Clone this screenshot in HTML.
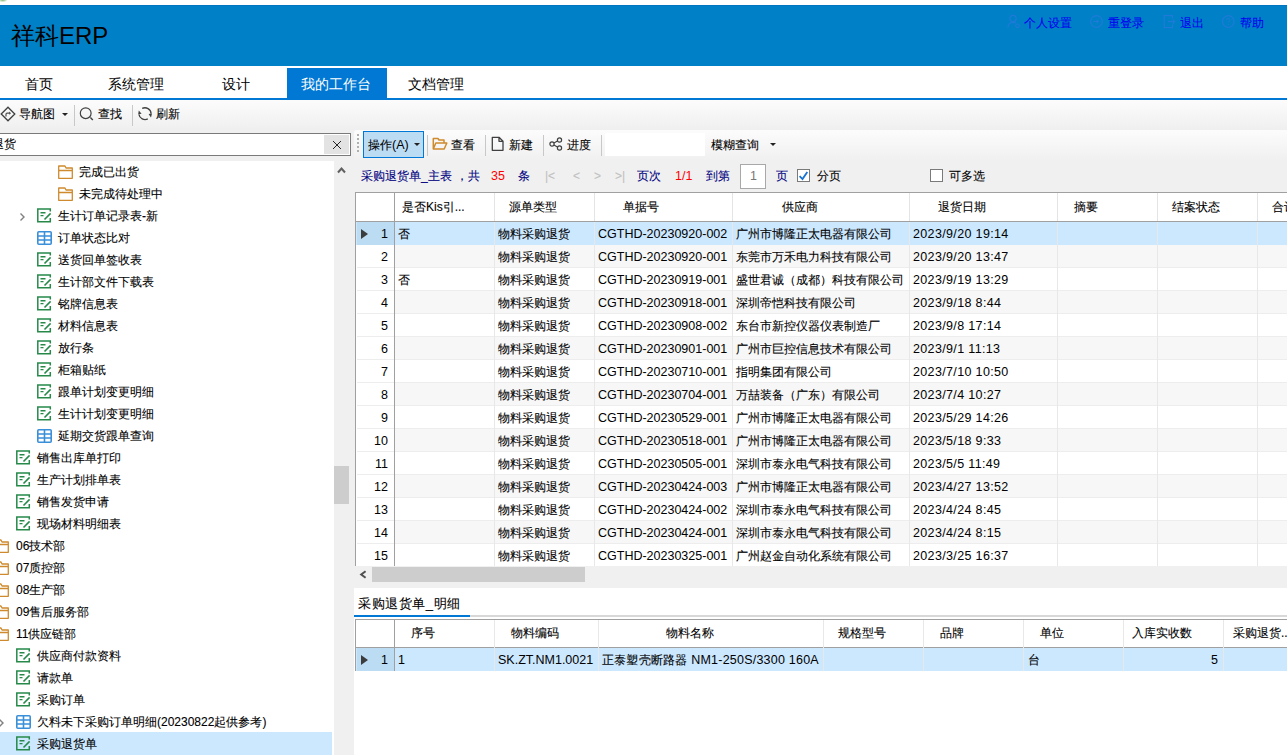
<!DOCTYPE html><html><head><meta charset="utf-8"><style>
*{box-sizing:border-box;margin:0;padding:0}
html,body{width:1287px;height:755px;overflow:hidden;background:#fff}
body{position:relative;font-family:"Liberation Sans",sans-serif;font-size:12px;color:#000;-webkit-text-stroke:0.1px}
.a{position:absolute;white-space:nowrap}
.t{position:absolute;white-space:nowrap;line-height:14px;height:14px}
.l{font-size:12.5px;-webkit-text-stroke:0}
#hdr{left:0;top:5px;width:1287px;height:61px;background:#0080c6;border-top:1px solid #0074bf}
#title{left:11px;top:21px;font-size:24px;line-height:30px;color:#000;-webkit-text-stroke:0}
.toplink{color:#0000f0;font-size:12px}
.nav{font-size:14px;line-height:16px;top:76px;-webkit-text-stroke:0}
#navline{left:0;top:98px;width:1287px;height:2px;background:#0078d4}
#acttab{left:287px;top:68px;width:100px;height:31px;background:#0078d4}
#tb1{left:0;top:100px;width:1287px;height:30px;background:linear-gradient(#fcfcfc,#efefef)}
.sep{position:absolute;width:1px;background:#c8c8c8}
#leftbg{left:0;top:130px;width:355px;height:625px;background:#f0f0f0}
#search{left:-1px;top:133px;width:352px;height:23px;border:1px solid #7a7a7a;background:#fff}
#xbtn{left:324px;top:135px;width:25px;height:19px;background:#e3e3e3}
#tree{left:0;top:161px;width:334px;height:594px;background:#fff}
#vtrack{left:334px;top:161px;width:21px;height:594px;background:#f0f0f0}
#vthumb{left:334px;top:466px;width:15px;height:38px;background:#cdcdcd}
#rightbg{left:355px;top:130px;width:932px;height:625px;background:#f0f0f0}
#tb2{left:354px;top:130px;width:933px;height:31px;background:linear-gradient(#fcfcfc,#f0f0f0);border-radius:3px 0 0 0}
#opbtn{left:363px;top:131px;width:61px;height:27px;background:#bcdcf4;border:1px solid #0078d7}
#grid{left:355px;top:192px;width:932px;height:375px;background:#fff;border-left:1px solid #a0a0a0;border-top:1px solid #a0a0a0}
.vl{position:absolute;width:1px;background:#e8e8e8}
.hl{position:absolute;height:1px;background:#ededed}
.tree .t{color:#000}
.sel{background:#cce8ff}
.gray{color:#c0c0c0}
.nv{color:#000080}
.red{color:#ff0000}
</style></head><body>
<div class="a" style="left:0;top:0;width:7px;height:2px;background:radial-gradient(ellipse at 40% 0,#7fb36a,rgba(255,255,255,0) 80%)"></div>
<div class="a" id="hdr"></div>
<div class="a" id="title">祥科<span style="font-size:24px">ERP</span></div>
<div class="t toplink" style="left:1024px;top:16px">个人设置</div>
<div class="t toplink" style="left:1108px;top:16px">重登录</div>
<div class="t toplink" style="left:1180px;top:16px">退出</div>
<div class="t toplink" style="left:1240px;top:16px">帮助</div>
<svg class="a" style="left:1007px;top:14px" width="14" height="15" viewBox="0 0 14 15"><circle cx="6" cy="4.5" r="3.2" fill="none" stroke="#1f7ad9" stroke-width="1.2"/><path d="M0.8 13.5 Q1.5 8.5 6 8.3 Q8 8.3 9 9" fill="none" stroke="#1f7ad9" stroke-width="1.2"/><circle cx="10.5" cy="11.8" r="1.8" fill="none" stroke="#1f7ad9" stroke-width="1.1"/></svg>
<svg class="a" style="left:1090px;top:14px" width="14" height="15" viewBox="0 0 14 15"><circle cx="6.5" cy="7.5" r="5.8" fill="none" stroke="#1f7ad9" stroke-width="1.2"/><path d="M3.5 7.5 H8.5 M6.8 5.8 L8.5 7.5 L6.8 9.2" fill="none" stroke="#1f7ad9" stroke-width="1.1"/></svg>
<svg class="a" style="left:1163px;top:14px" width="14" height="15" viewBox="0 0 14 15"><path d="M9.5 4.5 V1.6 H1.2 V13.6 H9.5 V10.5" fill="none" stroke="#1f7ad9" stroke-width="1.2"/><path d="M5 7.6 H11.8 M9.8 5.6 L11.8 7.6 L9.8 9.6" fill="none" stroke="#1f7ad9" stroke-width="1.1"/></svg>
<svg class="a" style="left:1222px;top:14px" width="14" height="15" viewBox="0 0 14 15"><circle cx="6.3" cy="7.5" r="5.8" fill="none" stroke="#1f7ad9" stroke-width="1.2"/><path d="M4.8 6 Q4.8 4.3 6.4 4.3 Q8 4.3 8 5.8 Q8 6.8 6.4 7.4 V8.6" fill="none" stroke="#1f7ad9" stroke-width="1"/><circle cx="6.4" cy="10.4" r="0.6" fill="#1f7ad9"/></svg>
<div class="a" id="acttab"></div>
<div class="a" id="navline"></div>
<div class="a nav" style="left:25px;color:#000">首页</div>
<div class="a nav" style="left:108px;color:#000">系统管理</div>
<div class="a nav" style="left:222px;color:#000">设计</div>
<div class="a nav" style="left:301px;color:#fff">我的工作台</div>
<div class="a nav" style="left:408px;color:#000">文档管理</div>
<div class="a" id="tb1"></div>
<div class="a" id="leftbg"></div>
<div class="a" id="rightbg"></div>
<svg class="a" style="left:0px;top:106px" width="16" height="16" viewBox="0 0 16 16"><path d="M8 1.2 L14.8 8 L8 14.8 L1.2 8 Z" fill="none" stroke="#404040" stroke-width="1.3"/><path d="M6 10.5 V8.3 Q6 7.2 7.2 7.2 H10" fill="none" stroke="#505050" stroke-width="1.2"/><path d="M9.2 5.6 L11 7.2 L9.2 8.8 Z" fill="#505050"/></svg>
<div class="t" style="left:19px;top:107px">导航图</div>
<div class="a" style="left:61.5px;top:113px;width:0;height:0;border-left:3px solid transparent;border-right:3px solid transparent;border-top:3px solid #222"></div>
<div class="sep" style="left:74px;top:105px;height:21px"></div>
<svg class="a" style="left:79px;top:106px" width="16" height="16" viewBox="0 0 16 16"><circle cx="6.7" cy="7.2" r="5.4" fill="none" stroke="#404040" stroke-width="1.2"/><path d="M11.4 11.6 L13.8 14" stroke="#404040" stroke-width="1.4"/></svg>
<div class="t" style="left:98px;top:107px">查找</div>
<div class="sep" style="left:132px;top:105px;height:21px"></div>
<svg class="a" style="left:137px;top:106px" width="16" height="16" viewBox="0 0 16 16"><path d="M5.2 2.4 A6.2 6.2 0 0 1 14.1 7.6" fill="none" stroke="#404040" stroke-width="1.3"/><path d="M10.8 12.9 A6.2 6.2 0 0 1 1.9 8.4" fill="none" stroke="#404040" stroke-width="1.3"/><path d="M11.6 8 L15 7.6 L14 11.4 Z" fill="#404040"/><path d="M1.8 4.4 L4.6 7.8 L1.2 8.2 Z" fill="#404040"/></svg>
<div class="t" style="left:156px;top:107px">刷新</div>
<div class="a" id="search"></div>
<div class="t" style="left:-8px;top:137px">退货</div>
<div class="a" id="xbtn"></div>
<svg class="a" style="left:332px;top:140px" width="10" height="10" viewBox="0 0 10 10"><path d="M1 1 L9 9 M9 1 L1 9" stroke="#111" stroke-width="0.9"/></svg>
<div class="a" id="tree"></div>
<div class="a" id="vtrack"></div>
<div class="a" id="vthumb"></div>
<svg class="a" style="left:337px;top:166px" width="9" height="8" viewBox="0 0 9 8"><path d="M1 6.5 L4.5 2.5 L8 6.5" fill="none" stroke="#606060" stroke-width="2"/></svg>
<svg class="a" style="left:58px;top:165px" width="16" height="16" viewBox="0 0 16 16"><path d="M0.7 1 H7 L8 3 H14.3 V13.3 H0.7 Z M0.7 5.5 H14.3" fill="none" stroke="#cf8a2d" stroke-width="1.3" stroke-linejoin="round"/></svg>
<div class="t" style="left:79px;top:165px">完成已出货</div>
<svg class="a" style="left:58px;top:187px" width="16" height="16" viewBox="0 0 16 16"><path d="M0.7 1 H7 L8 3 H14.3 V13.3 H0.7 Z M0.7 5.5 H14.3" fill="none" stroke="#cf8a2d" stroke-width="1.3" stroke-linejoin="round"/></svg>
<div class="t" style="left:79px;top:187px">未完成待处理中</div>
<svg class="a" style="left:19px;top:212px" width="7" height="10" viewBox="0 0 7 10"><path d="M1.5 1.5 L5 5 L1.5 8.5" fill="none" stroke="#808080" stroke-width="1.4"/></svg>
<svg class="a" style="left:37px;top:208px" width="16" height="16" viewBox="0 0 16 16"><path d="M13.3 3.5 V1 H0.8 V13.8 H13.3 V10" fill="none" stroke="#26894a" stroke-width="1.5"/><path d="M3.5 4.8 H8.5 M3.5 7.6 H6.5" stroke="#26894a" stroke-width="1.4"/><path d="M7.5 11.5 L13.6 5.4" stroke="#26894a" stroke-width="1.6"/></svg>
<div class="t" style="left:58px;top:209px">生计订单记录表<span class="">-</span>新</div>
<svg class="a" style="left:37px;top:231px" width="16" height="16" viewBox="0 0 16 16"><rect x="0.8" y="0.8" width="13.4" height="12.4" rx="1" fill="none" stroke="#3a8fd9" stroke-width="1.6"/><path d="M0.8 5 H14.2 M0.8 9 H14.2 M7.5 0.8 V13.2" stroke="#3a8fd9" stroke-width="1.6"/></svg>
<div class="t" style="left:58px;top:231px">订单状态比对</div>
<svg class="a" style="left:37px;top:252px" width="16" height="16" viewBox="0 0 16 16"><path d="M13.3 3.5 V1 H0.8 V13.8 H13.3 V10" fill="none" stroke="#26894a" stroke-width="1.5"/><path d="M3.5 4.8 H8.5 M3.5 7.6 H6.5" stroke="#26894a" stroke-width="1.4"/><path d="M7.5 11.5 L13.6 5.4" stroke="#26894a" stroke-width="1.6"/></svg>
<div class="t" style="left:58px;top:253px">送货回单签收表</div>
<svg class="a" style="left:37px;top:274px" width="16" height="16" viewBox="0 0 16 16"><path d="M13.3 3.5 V1 H0.8 V13.8 H13.3 V10" fill="none" stroke="#26894a" stroke-width="1.5"/><path d="M3.5 4.8 H8.5 M3.5 7.6 H6.5" stroke="#26894a" stroke-width="1.4"/><path d="M7.5 11.5 L13.6 5.4" stroke="#26894a" stroke-width="1.6"/></svg>
<div class="t" style="left:58px;top:275px">生计部文件下载表</div>
<svg class="a" style="left:37px;top:296px" width="16" height="16" viewBox="0 0 16 16"><path d="M13.3 3.5 V1 H0.8 V13.8 H13.3 V10" fill="none" stroke="#26894a" stroke-width="1.5"/><path d="M3.5 4.8 H8.5 M3.5 7.6 H6.5" stroke="#26894a" stroke-width="1.4"/><path d="M7.5 11.5 L13.6 5.4" stroke="#26894a" stroke-width="1.6"/></svg>
<div class="t" style="left:58px;top:297px">铭牌信息表</div>
<svg class="a" style="left:37px;top:318px" width="16" height="16" viewBox="0 0 16 16"><path d="M13.3 3.5 V1 H0.8 V13.8 H13.3 V10" fill="none" stroke="#26894a" stroke-width="1.5"/><path d="M3.5 4.8 H8.5 M3.5 7.6 H6.5" stroke="#26894a" stroke-width="1.4"/><path d="M7.5 11.5 L13.6 5.4" stroke="#26894a" stroke-width="1.6"/></svg>
<div class="t" style="left:58px;top:319px">材料信息表</div>
<svg class="a" style="left:37px;top:340px" width="16" height="16" viewBox="0 0 16 16"><path d="M13.3 3.5 V1 H0.8 V13.8 H13.3 V10" fill="none" stroke="#26894a" stroke-width="1.5"/><path d="M3.5 4.8 H8.5 M3.5 7.6 H6.5" stroke="#26894a" stroke-width="1.4"/><path d="M7.5 11.5 L13.6 5.4" stroke="#26894a" stroke-width="1.6"/></svg>
<div class="t" style="left:58px;top:341px">放行条</div>
<svg class="a" style="left:37px;top:362px" width="16" height="16" viewBox="0 0 16 16"><path d="M13.3 3.5 V1 H0.8 V13.8 H13.3 V10" fill="none" stroke="#26894a" stroke-width="1.5"/><path d="M3.5 4.8 H8.5 M3.5 7.6 H6.5" stroke="#26894a" stroke-width="1.4"/><path d="M7.5 11.5 L13.6 5.4" stroke="#26894a" stroke-width="1.6"/></svg>
<div class="t" style="left:58px;top:363px">柜箱贴纸</div>
<svg class="a" style="left:37px;top:384px" width="16" height="16" viewBox="0 0 16 16"><path d="M13.3 3.5 V1 H0.8 V13.8 H13.3 V10" fill="none" stroke="#26894a" stroke-width="1.5"/><path d="M3.5 4.8 H8.5 M3.5 7.6 H6.5" stroke="#26894a" stroke-width="1.4"/><path d="M7.5 11.5 L13.6 5.4" stroke="#26894a" stroke-width="1.6"/></svg>
<div class="t" style="left:58px;top:385px">跟单计划变更明细</div>
<svg class="a" style="left:37px;top:406px" width="16" height="16" viewBox="0 0 16 16"><path d="M13.3 3.5 V1 H0.8 V13.8 H13.3 V10" fill="none" stroke="#26894a" stroke-width="1.5"/><path d="M3.5 4.8 H8.5 M3.5 7.6 H6.5" stroke="#26894a" stroke-width="1.4"/><path d="M7.5 11.5 L13.6 5.4" stroke="#26894a" stroke-width="1.6"/></svg>
<div class="t" style="left:58px;top:407px">生计计划变更明细</div>
<svg class="a" style="left:37px;top:429px" width="16" height="16" viewBox="0 0 16 16"><rect x="0.8" y="0.8" width="13.4" height="12.4" rx="1" fill="none" stroke="#3a8fd9" stroke-width="1.6"/><path d="M0.8 5 H14.2 M0.8 9 H14.2 M7.5 0.8 V13.2" stroke="#3a8fd9" stroke-width="1.6"/></svg>
<div class="t" style="left:58px;top:429px">延期交货跟单查询</div>
<svg class="a" style="left:16px;top:450px" width="16" height="16" viewBox="0 0 16 16"><path d="M13.3 3.5 V1 H0.8 V13.8 H13.3 V10" fill="none" stroke="#26894a" stroke-width="1.5"/><path d="M3.5 4.8 H8.5 M3.5 7.6 H6.5" stroke="#26894a" stroke-width="1.4"/><path d="M7.5 11.5 L13.6 5.4" stroke="#26894a" stroke-width="1.6"/></svg>
<div class="t" style="left:37px;top:451px">销售出库单打印</div>
<svg class="a" style="left:16px;top:472px" width="16" height="16" viewBox="0 0 16 16"><path d="M13.3 3.5 V1 H0.8 V13.8 H13.3 V10" fill="none" stroke="#26894a" stroke-width="1.5"/><path d="M3.5 4.8 H8.5 M3.5 7.6 H6.5" stroke="#26894a" stroke-width="1.4"/><path d="M7.5 11.5 L13.6 5.4" stroke="#26894a" stroke-width="1.6"/></svg>
<div class="t" style="left:37px;top:473px">生产计划排单表</div>
<svg class="a" style="left:16px;top:494px" width="16" height="16" viewBox="0 0 16 16"><path d="M13.3 3.5 V1 H0.8 V13.8 H13.3 V10" fill="none" stroke="#26894a" stroke-width="1.5"/><path d="M3.5 4.8 H8.5 M3.5 7.6 H6.5" stroke="#26894a" stroke-width="1.4"/><path d="M7.5 11.5 L13.6 5.4" stroke="#26894a" stroke-width="1.6"/></svg>
<div class="t" style="left:37px;top:495px">销售发货申请</div>
<svg class="a" style="left:16px;top:516px" width="16" height="16" viewBox="0 0 16 16"><path d="M13.3 3.5 V1 H0.8 V13.8 H13.3 V10" fill="none" stroke="#26894a" stroke-width="1.5"/><path d="M3.5 4.8 H8.5 M3.5 7.6 H6.5" stroke="#26894a" stroke-width="1.4"/><path d="M7.5 11.5 L13.6 5.4" stroke="#26894a" stroke-width="1.6"/></svg>
<div class="t" style="left:37px;top:517px">现场材料明细表</div>
<svg class="a" style="left:-6px;top:539px" width="16" height="16" viewBox="0 0 16 16"><path d="M0.7 1 H7 L8 3 H14.3 V13.3 H0.7 Z M0.7 5.5 H14.3" fill="none" stroke="#cf8a2d" stroke-width="1.3" stroke-linejoin="round"/></svg>
<div class="t" style="left:16px;top:539px"><span class="">06</span>技术部</div>
<svg class="a" style="left:-6px;top:561px" width="16" height="16" viewBox="0 0 16 16"><path d="M0.7 1 H7 L8 3 H14.3 V13.3 H0.7 Z M0.7 5.5 H14.3" fill="none" stroke="#cf8a2d" stroke-width="1.3" stroke-linejoin="round"/></svg>
<div class="t" style="left:16px;top:561px"><span class="">07</span>质控部</div>
<svg class="a" style="left:-6px;top:583px" width="16" height="16" viewBox="0 0 16 16"><path d="M0.7 1 H7 L8 3 H14.3 V13.3 H0.7 Z M0.7 5.5 H14.3" fill="none" stroke="#cf8a2d" stroke-width="1.3" stroke-linejoin="round"/></svg>
<div class="t" style="left:16px;top:583px"><span class="">08</span>生产部</div>
<svg class="a" style="left:-6px;top:605px" width="16" height="16" viewBox="0 0 16 16"><path d="M0.7 1 H7 L8 3 H14.3 V13.3 H0.7 Z M0.7 5.5 H14.3" fill="none" stroke="#cf8a2d" stroke-width="1.3" stroke-linejoin="round"/></svg>
<div class="t" style="left:16px;top:605px"><span class="">09</span>售后服务部</div>
<svg class="a" style="left:-6px;top:627px" width="16" height="16" viewBox="0 0 16 16"><path d="M0.7 1 H7 L8 3 H14.3 V13.3 H0.7 Z M0.7 5.5 H14.3" fill="none" stroke="#cf8a2d" stroke-width="1.3" stroke-linejoin="round"/></svg>
<div class="t" style="left:16px;top:627px"><span class="">11</span>供应链部</div>
<svg class="a" style="left:16px;top:648px" width="16" height="16" viewBox="0 0 16 16"><path d="M13.3 3.5 V1 H0.8 V13.8 H13.3 V10" fill="none" stroke="#26894a" stroke-width="1.5"/><path d="M3.5 4.8 H8.5 M3.5 7.6 H6.5" stroke="#26894a" stroke-width="1.4"/><path d="M7.5 11.5 L13.6 5.4" stroke="#26894a" stroke-width="1.6"/></svg>
<div class="t" style="left:37px;top:649px">供应商付款资料</div>
<svg class="a" style="left:16px;top:670px" width="16" height="16" viewBox="0 0 16 16"><path d="M13.3 3.5 V1 H0.8 V13.8 H13.3 V10" fill="none" stroke="#26894a" stroke-width="1.5"/><path d="M3.5 4.8 H8.5 M3.5 7.6 H6.5" stroke="#26894a" stroke-width="1.4"/><path d="M7.5 11.5 L13.6 5.4" stroke="#26894a" stroke-width="1.6"/></svg>
<div class="t" style="left:37px;top:671px">请款单</div>
<svg class="a" style="left:16px;top:692px" width="16" height="16" viewBox="0 0 16 16"><path d="M13.3 3.5 V1 H0.8 V13.8 H13.3 V10" fill="none" stroke="#26894a" stroke-width="1.5"/><path d="M3.5 4.8 H8.5 M3.5 7.6 H6.5" stroke="#26894a" stroke-width="1.4"/><path d="M7.5 11.5 L13.6 5.4" stroke="#26894a" stroke-width="1.6"/></svg>
<div class="t" style="left:37px;top:693px">采购订单</div>
<svg class="a" style="left:-2px;top:718px" width="7" height="10" viewBox="0 0 7 10"><path d="M1.5 1.5 L5 5 L1.5 8.5" fill="none" stroke="#808080" stroke-width="1.4"/></svg>
<svg class="a" style="left:16px;top:715px" width="16" height="16" viewBox="0 0 16 16"><rect x="0.8" y="0.8" width="13.4" height="12.4" rx="1" fill="none" stroke="#3a8fd9" stroke-width="1.6"/><path d="M0.8 5 H14.2 M0.8 9 H14.2 M7.5 0.8 V13.2" stroke="#3a8fd9" stroke-width="1.6"/></svg>
<div class="t" style="left:37px;top:715px">欠料未下采购订单明细<span class="">(20230822</span>起供参考<span class="">)</span></div>
<div class="a sel" style="left:0;top:732px;width:332px;height:23px"></div>
<svg class="a" style="left:16px;top:736px" width="16" height="16" viewBox="0 0 16 16"><path d="M13.3 3.5 V1 H0.8 V13.8 H13.3 V10" fill="none" stroke="#26894a" stroke-width="1.5"/><path d="M3.5 4.8 H8.5 M3.5 7.6 H6.5" stroke="#26894a" stroke-width="1.4"/><path d="M7.5 11.5 L13.6 5.4" stroke="#26894a" stroke-width="1.6"/></svg>
<div class="t" style="left:37px;top:737px">采购退货单</div>
<div class="a" id="tb2"></div>
<div class="a" style="left:357px;top:134px;width:2px;height:2px;background:#b0b0b0"></div>
<div class="a" style="left:357px;top:138px;width:2px;height:2px;background:#b0b0b0"></div>
<div class="a" style="left:357px;top:142px;width:2px;height:2px;background:#b0b0b0"></div>
<div class="a" style="left:357px;top:146px;width:2px;height:2px;background:#b0b0b0"></div>
<div class="a" style="left:357px;top:150px;width:2px;height:2px;background:#b0b0b0"></div>
<div class="a" id="opbtn"></div>
<div class="t" style="left:368px;top:138px">操作<span class="l">(A)</span></div>
<div class="a" style="left:414px;top:143px;border-left:3px solid transparent;border-right:3px solid transparent;border-top:3px solid #222"></div>
<div class="sep" style="left:427px;top:135px;height:21px"></div>
<div class="sep" style="left:485px;top:135px;height:21px"></div>
<div class="sep" style="left:543px;top:135px;height:21px"></div>
<div class="sep" style="left:601px;top:135px;height:21px"></div>
<svg class="a" style="left:432px;top:137px" width="16" height="14" viewBox="0 0 16 14"><path d="M1.3 12 V1.5 H6 L7 3 H12 V5.5 M1.3 12 L3.8 6 H14.8 L12.2 12 Z" fill="none" stroke="#cf8a2d" stroke-width="1.5" stroke-linejoin="round"/></svg>
<div class="t" style="left:451px;top:138px">查看</div>
<svg class="a" style="left:491px;top:136px" width="14" height="16" viewBox="0 0 14 16"><path d="M1.3 1.3 H8 L12 5.3 V14.3 H1.3 Z M8 1.3 V5.3 H12" fill="none" stroke="#404040" stroke-width="1.3" stroke-linejoin="round"/></svg>
<div class="t" style="left:509px;top:138px">新建</div>
<svg class="a" style="left:549px;top:137px" width="14" height="14" viewBox="0 0 14 14"><circle cx="3" cy="7" r="2.1" fill="none" stroke="#404040" stroke-width="1.2"/><circle cx="10.5" cy="3" r="2.1" fill="none" stroke="#404040" stroke-width="1.2"/><circle cx="10.5" cy="11" r="2.1" fill="none" stroke="#404040" stroke-width="1.2"/><path d="M4.9 6 L8.5 4 M4.9 8 L8.5 10" stroke="#404040" stroke-width="1.2"/></svg>
<div class="t" style="left:567px;top:138px">进度</div>
<div class="a" style="left:605px;top:133px;width:100px;height:23px;background:#fff"></div>
<div class="t" style="left:711px;top:138px">模糊查询</div>
<div class="a" style="left:770px;top:143px;border-left:3px solid transparent;border-right:3px solid transparent;border-top:3px solid #222"></div>
<div class="t nv" style="left:361px;top:169px">采购退货单_主表</div>
<div class="t nv" style="left:456px;top:169px">，共</div>
<div class="t red" style="left:491px;top:169px"><span class="l">35</span></div>
<div class="t nv" style="left:518px;top:169px">条</div>
<div class="t gray" style="left:545px;top:169px">|&lt;</div>
<div class="t gray" style="left:573px;top:169px">&lt;</div>
<div class="t gray" style="left:594px;top:169px">&gt;</div>
<div class="t gray" style="left:615px;top:169px">&gt;|</div>
<div class="t nv" style="left:637px;top:169px">页次</div>
<div class="t red" style="left:675px;top:169px"><span class="l">1/1</span></div>
<div class="t nv" style="left:706px;top:169px">到第</div>
<div class="a" style="left:740px;top:164px;width:26px;height:25px;background:#fff;border:1px solid #a8a8a8"></div>
<div class="t" style="left:750px;top:169px;color:#777"><span class="l">1</span></div>
<div class="t nv" style="left:776px;top:169px">页</div>
<svg class="a" style="left:797px;top:169px" width="13" height="13" viewBox="0 0 13 13"><rect x="0.5" y="0.5" width="12" height="12" fill="#fff" stroke="#7a7a7a"/><path d="M2.6 7.2 L5.5 10.1 L10.3 2.9" fill="none" stroke="#1874d2" stroke-width="1.8"/></svg>
<div class="t" style="left:817px;top:169px">分页</div>
<svg class="a" style="left:930px;top:169px" width="13" height="13" viewBox="0 0 13 13"><rect x="0.5" y="0.5" width="12" height="12" fill="#fff" stroke="#7a7a7a"/></svg>
<div class="t" style="left:949px;top:169px">可多选</div>
<div class="a" style="left:355px;top:192px;width:932px;height:374px;background:#fff"></div>
<div class="a sel" style="left:356px;top:222px;width:931px;height:23px"></div>
<div class="a" style="left:357px;top:222px;width:37px;height:23px;background:#bcdcf4"></div>
<div class="t" style="left:360px;top:227px;width:28px;text-align:right"><span class="l">1</span></div>
<div class="t" style="left:398px;top:227px">否</div>
<div class="t" style="left:498px;top:227px">物料采购退货</div>
<div class="t" style="left:598px;top:227px"><span class="l">CGTHD-20230920-002</span></div>
<div class="t" style="left:736px;top:227px">广州市博隆正太电器有限公司</div>
<div class="t" style="left:913px;top:227px;letter-spacing:0.35px"><span class="l">2023/9/20 19:14</span></div>
<div class="a" style="left:395px;top:245px;width:892px;height:22px;background:#f7f7f7"></div>
<div class="hl" style="left:357px;top:267px;width:930px"></div>
<div class="t" style="left:360px;top:250px;width:28px;text-align:right"><span class="l">2</span></div>
<div class="t" style="left:498px;top:250px">物料采购退货</div>
<div class="t" style="left:598px;top:250px"><span class="l">CGTHD-20230920-001</span></div>
<div class="t" style="left:736px;top:250px">东莞市万禾电力科技有限公司</div>
<div class="t" style="left:913px;top:250px;letter-spacing:0.35px"><span class="l">2023/9/20 13:47</span></div>
<div class="hl" style="left:357px;top:290px;width:930px"></div>
<div class="t" style="left:360px;top:273px;width:28px;text-align:right"><span class="l">3</span></div>
<div class="t" style="left:398px;top:273px">否</div>
<div class="t" style="left:498px;top:273px">物料采购退货</div>
<div class="t" style="left:598px;top:273px"><span class="l">CGTHD-20230919-001</span></div>
<div class="t" style="left:736px;top:273px">盛世君诚（成都）科技有限公司</div>
<div class="t" style="left:913px;top:273px;letter-spacing:0.35px"><span class="l">2023/9/19 13:29</span></div>
<div class="a" style="left:395px;top:291px;width:892px;height:22px;background:#f7f7f7"></div>
<div class="hl" style="left:357px;top:313px;width:930px"></div>
<div class="t" style="left:360px;top:296px;width:28px;text-align:right"><span class="l">4</span></div>
<div class="t" style="left:498px;top:296px">物料采购退货</div>
<div class="t" style="left:598px;top:296px"><span class="l">CGTHD-20230918-001</span></div>
<div class="t" style="left:736px;top:296px">深圳帝恺科技有限公司</div>
<div class="t" style="left:913px;top:296px;letter-spacing:0.35px"><span class="l">2023/9/18 8:44</span></div>
<div class="hl" style="left:357px;top:336px;width:930px"></div>
<div class="t" style="left:360px;top:319px;width:28px;text-align:right"><span class="l">5</span></div>
<div class="t" style="left:498px;top:319px">物料采购退货</div>
<div class="t" style="left:598px;top:319px"><span class="l">CGTHD-20230908-002</span></div>
<div class="t" style="left:736px;top:319px">东台市新控仪器仪表制造厂</div>
<div class="t" style="left:913px;top:319px;letter-spacing:0.35px"><span class="l">2023/9/8 17:14</span></div>
<div class="a" style="left:395px;top:337px;width:892px;height:22px;background:#f7f7f7"></div>
<div class="hl" style="left:357px;top:359px;width:930px"></div>
<div class="t" style="left:360px;top:342px;width:28px;text-align:right"><span class="l">6</span></div>
<div class="t" style="left:498px;top:342px">物料采购退货</div>
<div class="t" style="left:598px;top:342px"><span class="l">CGTHD-20230901-001</span></div>
<div class="t" style="left:736px;top:342px">广州市巨控信息技术有限公司</div>
<div class="t" style="left:913px;top:342px;letter-spacing:0.35px"><span class="l">2023/9/1 11:13</span></div>
<div class="hl" style="left:357px;top:382px;width:930px"></div>
<div class="t" style="left:360px;top:365px;width:28px;text-align:right"><span class="l">7</span></div>
<div class="t" style="left:498px;top:365px">物料采购退货</div>
<div class="t" style="left:598px;top:365px"><span class="l">CGTHD-20230710-001</span></div>
<div class="t" style="left:736px;top:365px">指明集团有限公司</div>
<div class="t" style="left:913px;top:365px;letter-spacing:0.35px"><span class="l">2023/7/10 10:50</span></div>
<div class="a" style="left:395px;top:383px;width:892px;height:22px;background:#f7f7f7"></div>
<div class="hl" style="left:357px;top:405px;width:930px"></div>
<div class="t" style="left:360px;top:388px;width:28px;text-align:right"><span class="l">8</span></div>
<div class="t" style="left:498px;top:388px">物料采购退货</div>
<div class="t" style="left:598px;top:388px"><span class="l">CGTHD-20230704-001</span></div>
<div class="t" style="left:736px;top:388px">万喆装备（广东）有限公司</div>
<div class="t" style="left:913px;top:388px;letter-spacing:0.35px"><span class="l">2023/7/4 10:27</span></div>
<div class="hl" style="left:357px;top:428px;width:930px"></div>
<div class="t" style="left:360px;top:411px;width:28px;text-align:right"><span class="l">9</span></div>
<div class="t" style="left:498px;top:411px">物料采购退货</div>
<div class="t" style="left:598px;top:411px"><span class="l">CGTHD-20230529-001</span></div>
<div class="t" style="left:736px;top:411px">广州市博隆正太电器有限公司</div>
<div class="t" style="left:913px;top:411px;letter-spacing:0.35px"><span class="l">2023/5/29 14:26</span></div>
<div class="a" style="left:395px;top:429px;width:892px;height:22px;background:#f7f7f7"></div>
<div class="hl" style="left:357px;top:451px;width:930px"></div>
<div class="t" style="left:360px;top:434px;width:28px;text-align:right"><span class="l">10</span></div>
<div class="t" style="left:498px;top:434px">物料采购退货</div>
<div class="t" style="left:598px;top:434px"><span class="l">CGTHD-20230518-001</span></div>
<div class="t" style="left:736px;top:434px">广州市博隆正太电器有限公司</div>
<div class="t" style="left:913px;top:434px;letter-spacing:0.35px"><span class="l">2023/5/18 9:33</span></div>
<div class="hl" style="left:357px;top:474px;width:930px"></div>
<div class="t" style="left:360px;top:457px;width:28px;text-align:right"><span class="l">11</span></div>
<div class="t" style="left:498px;top:457px">物料采购退货</div>
<div class="t" style="left:598px;top:457px"><span class="l">CGTHD-20230505-001</span></div>
<div class="t" style="left:736px;top:457px">深圳市泰永电气科技有限公司</div>
<div class="t" style="left:913px;top:457px;letter-spacing:0.35px"><span class="l">2023/5/5 11:49</span></div>
<div class="a" style="left:395px;top:475px;width:892px;height:22px;background:#f7f7f7"></div>
<div class="hl" style="left:357px;top:497px;width:930px"></div>
<div class="t" style="left:360px;top:480px;width:28px;text-align:right"><span class="l">12</span></div>
<div class="t" style="left:498px;top:480px">物料采购退货</div>
<div class="t" style="left:598px;top:480px"><span class="l">CGTHD-20230424-003</span></div>
<div class="t" style="left:736px;top:480px">广州市博隆正太电器有限公司</div>
<div class="t" style="left:913px;top:480px;letter-spacing:0.35px"><span class="l">2023/4/27 13:52</span></div>
<div class="hl" style="left:357px;top:520px;width:930px"></div>
<div class="t" style="left:360px;top:503px;width:28px;text-align:right"><span class="l">13</span></div>
<div class="t" style="left:498px;top:503px">物料采购退货</div>
<div class="t" style="left:598px;top:503px"><span class="l">CGTHD-20230424-002</span></div>
<div class="t" style="left:736px;top:503px">深圳市泰永电气科技有限公司</div>
<div class="t" style="left:913px;top:503px;letter-spacing:0.35px"><span class="l">2023/4/24 8:45</span></div>
<div class="a" style="left:395px;top:521px;width:892px;height:22px;background:#f7f7f7"></div>
<div class="hl" style="left:357px;top:543px;width:930px"></div>
<div class="t" style="left:360px;top:526px;width:28px;text-align:right"><span class="l">14</span></div>
<div class="t" style="left:498px;top:526px">物料采购退货</div>
<div class="t" style="left:598px;top:526px"><span class="l">CGTHD-20230424-001</span></div>
<div class="t" style="left:736px;top:526px">深圳市泰永电气科技有限公司</div>
<div class="t" style="left:913px;top:526px;letter-spacing:0.35px"><span class="l">2023/4/24 8:15</span></div>
<div class="hl" style="left:357px;top:566px;width:930px"></div>
<div class="t" style="left:360px;top:549px;width:28px;text-align:right"><span class="l">15</span></div>
<div class="t" style="left:498px;top:549px">物料采购退货</div>
<div class="t" style="left:598px;top:549px"><span class="l">CGTHD-20230325-001</span></div>
<div class="t" style="left:736px;top:549px">广州赵金自动化系统有限公司</div>
<div class="t" style="left:913px;top:549px;letter-spacing:0.35px"><span class="l">2023/3/25 16:37</span></div>
<div class="a" style="left:361px;top:229px;border-top:5px solid transparent;border-bottom:5px solid transparent;border-left:7px solid #3c3c3c"></div>
<div class="vl" style="left:494px;top:193px;height:373px"></div>
<div class="vl" style="left:594px;top:193px;height:373px"></div>
<div class="vl" style="left:732px;top:193px;height:373px"></div>
<div class="vl" style="left:909px;top:193px;height:373px"></div>
<div class="vl" style="left:1057px;top:193px;height:373px"></div>
<div class="vl" style="left:1157px;top:193px;height:373px"></div>
<div class="vl" style="left:1257px;top:193px;height:373px"></div>
<div class="a" style="left:394px;top:193px;width:1px;height:373px;background:#a0a0a0"></div>
<div class="a" style="left:356px;top:193px;width:931px;height:28px;background:#fff"></div>
<div class="vl" style="left:494px;top:193px;height:28px;background:#e4e4e4"></div>
<div class="vl" style="left:594px;top:193px;height:28px;background:#e4e4e4"></div>
<div class="vl" style="left:732px;top:193px;height:28px;background:#e4e4e4"></div>
<div class="vl" style="left:909px;top:193px;height:28px;background:#e4e4e4"></div>
<div class="vl" style="left:1057px;top:193px;height:28px;background:#e4e4e4"></div>
<div class="vl" style="left:1157px;top:193px;height:28px;background:#e4e4e4"></div>
<div class="vl" style="left:1257px;top:193px;height:28px;background:#e4e4e4"></div>
<div class="a" style="left:394px;top:193px;width:1px;height:28px;background:#a0a0a0"></div>
<div class="a" style="left:355px;top:221px;width:932px;height:1px;background:#a0a0a0"></div>
<div class="a" style="left:355px;top:192px;width:932px;height:1px;background:#a0a0a0"></div>
<div class="a" style="left:355px;top:192px;width:1px;height:374px;background:#a0a0a0"></div>
<div class="t" style="left:402px;top:200px">是否<span class="">Kis</span>引<span class="">...</span></div>
<div class="t" style="left:509px;top:200px">源单类型</div>
<div class="t" style="left:623px;top:200px">单据号</div>
<div class="t" style="left:782px;top:200px">供应商</div>
<div class="t" style="left:938px;top:200px">退货日期</div>
<div class="t" style="left:1074px;top:200px">摘要</div>
<div class="t" style="left:1172px;top:200px">结案状态</div>
<div class="t" style="left:1272px;top:200px">合计</div>
<div class="a" style="left:355px;top:566px;width:932px;height:22px;background:#f0f0f0"></div>
<div class="a" style="left:372px;top:567px;width:213px;height:15px;background:#cdcdcd"></div>
<svg class="a" style="left:359px;top:570px" width="8" height="9" viewBox="0 0 8 9"><path d="M6.6 1.2 L2.2 4.5 L6.6 7.8" fill="none" stroke="#505050" stroke-width="2"/></svg>
<div class="a" style="left:354px;top:588px;width:933px;height:167px;background:#fff"></div>
<div class="t" style="left:358px;top:597px;font-size:13px;line-height:14px;letter-spacing:0.55px">采购退货单_明细</div>
<div class="a" style="left:355px;top:615px;width:932px;height:2px;background:#d8d8d8"></div>
<div class="a" style="left:354px;top:615px;width:116px;height:2px;background:#0078d4"></div>
<div class="a" style="left:355px;top:619px;width:932px;height:1px;background:#a0a0a0"></div>
<div class="a" style="left:355px;top:619px;width:1px;height:52px;background:#a0a0a0"></div>
<div class="a" style="left:355px;top:647px;width:932px;height:1px;background:#a0a0a0"></div>
<div class="a sel" style="left:356px;top:648px;width:931px;height:23px"></div>
<div class="a" style="left:357px;top:648px;width:37px;height:23px;background:#bcdcf4"></div>
<div class="vl" style="left:494px;top:620px;height:51px"></div>
<div class="vl" style="left:598px;top:620px;height:51px"></div>
<div class="vl" style="left:823px;top:620px;height:51px"></div>
<div class="vl" style="left:923px;top:620px;height:51px"></div>
<div class="vl" style="left:1023px;top:620px;height:51px"></div>
<div class="vl" style="left:1123px;top:620px;height:51px"></div>
<div class="vl" style="left:1223px;top:620px;height:51px"></div>
<div class="a" style="left:394px;top:620px;width:1px;height:51px;background:#a0a0a0"></div>
<div class="t" style="left:411px;top:626px">序号</div>
<div class="t" style="left:511px;top:626px">物料编码</div>
<div class="t" style="left:666px;top:626px">物料名称</div>
<div class="t" style="left:838px;top:626px">规格型号</div>
<div class="t" style="left:940px;top:626px">品牌</div>
<div class="t" style="left:1040px;top:626px">单位</div>
<div class="t" style="left:1132px;top:626px">入库实收数</div>
<div class="t" style="left:1233px;top:626px">采购退货<span class="">...</span></div>
<div class="a" style="left:361px;top:655px;border-top:5px solid transparent;border-bottom:5px solid transparent;border-left:7px solid #3c3c3c"></div>
<div class="t" style="left:360px;top:653px;width:28px;text-align:right"><span class="l">1</span></div>
<div class="t" style="left:398px;top:653px"><span class="l">1</span></div>
<div class="t" style="left:498px;top:653px"><span class="l">SK.ZT.NM1.0021</span></div>
<div class="t" style="left:602px;top:653px;letter-spacing:0.22px">正泰塑壳断路器<span class="l"> NM1-250S/3300 160A</span></div>
<div class="t" style="left:1028px;top:653px">台</div>
<div class="t" style="left:1200px;top:653px;width:18px;text-align:right"><span class="l">5</span></div>
</body></html>
